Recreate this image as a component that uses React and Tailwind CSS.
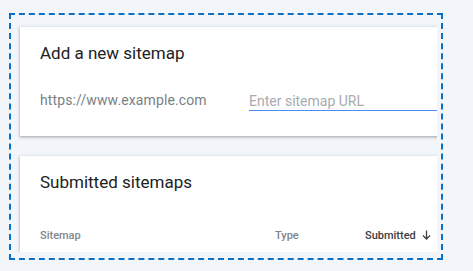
export default function App() {
  return (
    <div
      className="w-[473px] h-[271px] bg-[#f2f5fa] pl-[9px] pt-[13px] overflow-hidden"
      style={{ fontFamily: "Roboto, 'Liberation Sans', sans-serif" }}
    >
      <div className="w-[434px] h-[247px] border-2 border-dashed border-[#0a70c6] flex flex-col">
        <div className="flex-1 mr-[4px] mb-[6px] overflow-hidden pl-[9px] pt-[12px]">
          <div className="bg-white -mr-[20px] h-[109px] pt-[14px] pl-[20px] shadow-[0_1px_2px_0_rgba(60,64,67,0.3),0_1px_3px_1px_rgba(60,64,67,0.15)]">
            <div className="text-[17px] leading-[24px] text-[#202124]">Add a new sitemap</div>
            <div className="flex mt-[25px]">
              <div className="w-[209px] text-[14px] leading-[20px] tracking-[0.12px] text-[#7b7f84]">https://www.example.com</div>
              <div className="flex-1 border-b border-[#4a8af4] h-[21px]">
                <div className="text-[14px] leading-[20px] text-[#a8abb0] pt-px">Enter sitemap URL</div>
              </div>
            </div>
          </div>
          <div className="bg-white -mr-[20px] h-[140px] mt-[20px] pt-[14px] pl-[20px] shadow-[0_1px_2px_0_rgba(60,64,67,0.3),0_1px_3px_1px_rgba(60,64,67,0.15)]">
            <div className="text-[17px] leading-[24px] text-[#202124]">Submitted sitemaps</div>
            <div className="flex mt-[34px] text-[11px] leading-[16px] font-medium">
              <div className="w-[235px] text-[#80868b]">Sitemap</div>
              <div className="w-[90px] text-[#80868b]">Type</div>
              <div className="flex items-center text-[#3c4043]">
                <span>Submitted</span>
                <svg className="ml-[6px] -mt-[3px]" width="9" height="10" viewBox="0 0 9 10" fill="none" stroke="#3c4043" strokeWidth="1.3">
                  <path d="M4.5 0.5V9" />
                  <path d="M1 5.5L4.5 9L8 5.5" />
                </svg>
              </div>
            </div>
          </div>
        </div>
      </div>
    </div>
  );
}
